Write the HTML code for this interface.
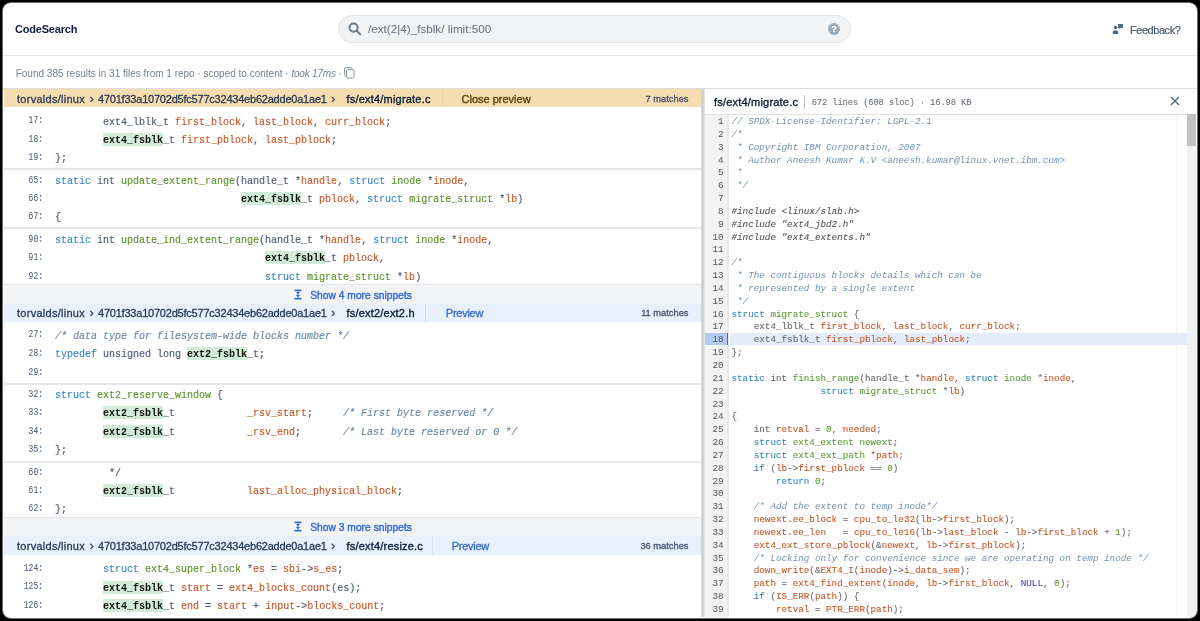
<!DOCTYPE html><html><head><meta charset="utf-8"><title>CodeSearch</title><style>html,body{margin:0;padding:0;width:1200px;height:621px;overflow:hidden;background:#000;}
.win{position:absolute;left:3px;top:3px;width:1194px;height:615px;background:#fff;border-radius:8px;overflow:hidden;box-shadow:0 0 0 1px #6e6e6e;}
.c{position:absolute;left:-3px;top:-3px;width:1200px;height:621px;font-family:"Liberation Sans",sans-serif;will-change:transform;}
.c div{position:absolute;white-space:pre;}
.c svg{position:absolute;}
.brand{left:15px;font-size:11px;line-height:14px;font-weight:bold;color:#0e1e38;letter-spacing:-0.2px;}
.search{left:338px;top:15px;width:511px;height:26px;border:1px solid #e1e4e8;background:#f1f3f4;border-radius:14px;}
.mag{left:348px;top:22px;}
.stext{left:368px;font-size:11.7px;line-height:14px;color:#646f7d;}
.help{left:828px;top:23px;width:12.4px;height:12.4px;border-radius:50%;background:#9fadba;}
.help span{position:absolute;left:0;top:0;width:12.4px;text-align:center;font-size:9.5px;line-height:12.4px;font-weight:bold;color:#fff;}
.fbi{left:1112px;top:23px;}
.fb{left:1130px;font-size:11px;line-height:14px;color:#4a5a6e;letter-spacing:-0.45px;-webkit-text-stroke-width:0.2px;}
.hline{left:0;top:55px;width:1200px;height:1px;background:#e5e7eb;}
.summary{left:15.7px;font-size:10px;line-height:13px;color:#748296;}
.summary i{letter-spacing:-0.2px;}
.copy{left:344.4px;top:67px;}
.rline{left:0;top:88px;width:1200px;height:1px;background:#dedede;}
.hdr{left:4px;width:697.5px;}
.ht{font-size:11px;line-height:14px;}
.repo{color:#2b3a55;letter-spacing:0.27px;-webkit-text-stroke-width:0.3px;}
.chev{color:#2b3a55;font-size:13px!important;-webkit-text-stroke-width:0.2px;}
.hash{color:#2b3a55;letter-spacing:-0.216px;-webkit-text-stroke-width:0.3px;}
.fname{color:#0e1e38;letter-spacing:0.2px;-webkit-text-stroke-width:0.35px;}
.hdiv{width:1px;}
.clp{color:#60440f;-webkit-text-stroke-width:0.4px;}
.prev{color:#3a6fc6;letter-spacing:-0.25px;-webkit-text-stroke-width:0.35px;}
.matches{right:511.5px;font-size:9.3px;line-height:12px;color:#44516b;-webkit-text-stroke-width:0.3px;}
.sep{left:4px;width:697.5px;height:2px;background:#e6e6e6;}
.band{left:4px;width:697.5px;background:#f3f4f6;border-top:1px solid #e3e5e8;box-sizing:border-box;}
.exp{left:293.5px;}
.bandt{left:310.2px;font-size:10.2px;line-height:12px;color:#3b6fd0;letter-spacing:0.05px;-webkit-text-stroke-width:0.45px;}
.ln{left:0;width:43px;text-align:right;font-family:"Liberation Mono",monospace;font-size:10px;line-height:14px;color:#56637d;transform:scaleX(0.8);transform-origin:100% 50%;-webkit-text-stroke-width:0.1px;}
.lc{left:55px;font-family:"Liberation Mono",monospace;font-size:10px;line-height:14px;color:#4f5b76;-webkit-text-stroke-width:0.15px;}
.lc .k{color:#3a88c2;}
.lc .t{color:#4f5b76;}
.lc .f{color:#5f922f;}
.lc .v{color:#c4582b;}
.lc .x{color:#4f5b76;}
.lc .cm{color:#6c86a6;font-style:italic;}
.lc .hl{background:#d3ecd9;color:#111;font-weight:bold;padding-top:2px;padding-bottom:0;-webkit-text-stroke-width:0;}
.rp{left:701px;top:88.5px;width:4px;height:528.5px;background:linear-gradient(90deg,#dcdcdc 0,#cdcdcd 45%,#d6d6d6 70%,#ececec 100%);}
.rptitle{left:714px;font-size:11px;line-height:14px;color:#0e1e38;letter-spacing:0.2px;-webkit-text-stroke-width:0.35px;}
.rpdiv{left:804.2px;top:95.3px;width:1px;height:13.4px;background:#b9bfc7;}
.rpmeta{left:811.7px;font-family:"Liberation Mono",monospace;font-size:8.8px;line-height:12px;color:#6d7480;letter-spacing:-0.13px;-webkit-text-stroke-width:0.1px;}
.close{left:1170px;top:96px;}
.rph{left:704px;top:113.5px;width:493px;height:1px;background:#e3e3e3;}
.gut{left:705px;top:114.5px;width:22px;height:502.5px;background:#f3f3f3;}
.gutb{left:727px;top:114.5px;width:2px;height:502.5px;background:#e9e9e9;}
.margin{left:1176px;top:114.5px;width:1px;height:502.5px;background:#f0f0f0;}
.curg{left:705px;width:22px;height:11.8px;background:#b4caec;}
.curbar{left:727px;width:1.2px;height:11.8px;background:#3d6fbd;}
.curl{left:730px;width:456.7px;height:11.8px;background:#e3ecfb;}
.track{left:1186.8px;top:114.3px;width:9.2px;height:502.7px;background:#f0f1f3;}
.thumb{left:1186.8px;top:113.8px;width:9.2px;height:32.4px;background:#c1c1c1;}
.rn{left:704px;width:19.5px;text-align:right;font-family:"Liberation Mono",monospace;font-size:9.275px;line-height:12.836px;color:#555;}
.rc{left:731.5px;font-family:"Liberation Mono",monospace;font-size:9.275px;line-height:12.836px;color:#6a6a6a;-webkit-text-stroke-width:0.1px;}
.rc .k{color:#3a88c2;}
.rc .t{color:#6a6a6a;}
.rc .f{color:#5f9a35;}
.rc .v{color:#c4582b;}
.rc .x{color:#6a6a6a;}
.rc .nu{color:#5f9a35;}
.rc .nl{color:#4b3fbf;}
.rc .cm{color:#7592b3;font-style:italic;-webkit-text-stroke-width:0;}
.rc .inc{color:#555;font-style:italic;}
</style></head><body><div class="win"><div class="c">
<div class="brand" style="top:22.19px">CodeSearch</div>
<div class="search"></div>
<svg class="mag" width="14" height="14" viewBox="0 0 14 14"><circle cx="5.6" cy="5.6" r="4.1" fill="none" stroke="#6a7988" stroke-width="1.9"/><path d="M8.6 8.6L12.2 12.2" stroke="#6a7988" stroke-width="2" stroke-linecap="round"/></svg>
<div class="stext" style="top:22.45px">/ext(2|4)_fsblk/ limit:500</div>
<div class="help"><span>?</span></div>
<svg class="fbi" width="12" height="12" viewBox="0 0 12 12"><circle cx="3.5" cy="4.5" r="1.75" fill="#536a85"/><path d="M0.7 10.9C0.4 8.2 1.3 7.2 3.5 7.2C5.7 7.2 6.6 8.2 6.3 10.9Z" fill="#536a85"/><path d="M6 1H10.9V4.9H8.3L7.1 6.3V4.9H6Z" fill="#536a85"/></svg>
<div class="fb" style="top:22.76px">Feedback?</div>
<div class="hline"></div>
<div class="summary" style="top:66.73px">Found 385 results in 31 files from 1 repo · scoped to content · <i>took 17ms</i> · </div>
<svg class="copy" width="11" height="12" viewBox="0 0 11 12"><rect x="0.6" y="0.6" width="7.4" height="8.4" rx="1.2" fill="none" stroke="#8592a1" stroke-width="1"/><rect x="2.5" y="2.6" width="7.6" height="8.4" rx="1.2" fill="#fff" stroke="#8592a1" stroke-width="1"/></svg>
<div class="rline"></div>
<div class="hdr" style="top:88.50px;height:18.70px;background:#f4ddb1"></div><div class="ht repo" style="top:92.19px;left:17px">torvalds/linux</div><div class="ht chev" style="top:92.19px;left:89.5px">&#x203A;</div><div class="ht hash" style="top:92.19px;left:98px">4701f33a10702d5fc577c32434eb62adde0a1ae1</div><div class="ht chev" style="top:92.19px;left:331px">&#x203A;</div><div class="ht fname" style="top:92.19px;left:346.5px">fs/ext4/migrate.c</div><div class="hdiv" style="top:88.50px;height:18.70px;left:441.5px;background:#ecd3a4"></div><div class="ht clp" style="top:92.19px;left:461.5px">Close preview</div><div class="matches" style="top:92.88px">7 matches</div>
<div class="sep" style="top:168px"></div>
<div class="sep" style="top:227px"></div>
<div class="sep" style="top:383px"></div>
<div class="sep" style="top:461px"></div>
<div class="band" style="top:284.40px;height:19.40px"></div><svg class="exp" style="top:289.30px" width="8" height="11" viewBox="0 0 8 11"><rect x="0.5" y="0.6" width="7" height="1.6" fill="#2d64cf"/><rect x="0.5" y="8.9" width="7" height="1.6" fill="#2d64cf"/><path d="M2 3.2Q4 2.6 6 3.2L4 5.3Z" fill="#2d64cf"/><path d="M1.9 6.1Q4 5.5 6.1 6.1L4 8.3Z" fill="#2d64cf"/><path d="M4 2.2V8.9" stroke="#2d64cf" stroke-width="0.7"/></svg><div class="bandt" style="top:289.77px">Show 4 more snippets</div>
<div class="hdr" style="top:303.80px;height:18.20px;background:#e7f0fb"></div><div class="ht repo" style="top:306.19px;left:17px">torvalds/linux</div><div class="ht chev" style="top:306.19px;left:89.5px">&#x203A;</div><div class="ht hash" style="top:306.19px;left:98px">4701f33a10702d5fc577c32434eb62adde0a1ae1</div><div class="ht chev" style="top:306.19px;left:331px">&#x203A;</div><div class="ht fname" style="top:306.19px;left:346.5px">fs/ext2/ext2.h</div><div class="hdiv" style="top:303.80px;height:18.20px;left:425.3px;background:#d3e1f3"></div><div class="ht prev" style="top:306.19px;left:445.8px">Preview</div><div class="matches" style="top:306.88px">11 matches</div>
<div class="band" style="top:517.20px;height:19.00px"></div><svg class="exp" style="top:521.30px" width="8" height="11" viewBox="0 0 8 11"><rect x="0.5" y="0.6" width="7" height="1.6" fill="#2d64cf"/><rect x="0.5" y="8.9" width="7" height="1.6" fill="#2d64cf"/><path d="M2 3.2Q4 2.6 6 3.2L4 5.3Z" fill="#2d64cf"/><path d="M1.9 6.1Q4 5.5 6.1 6.1L4 8.3Z" fill="#2d64cf"/><path d="M4 2.2V8.9" stroke="#2d64cf" stroke-width="0.7"/></svg><div class="bandt" style="top:521.77px">Show 3 more snippets</div>
<div class="hdr" style="top:536.20px;height:18.70px;background:#e7f0fb"></div><div class="ht repo" style="top:538.99px;left:17px">torvalds/linux</div><div class="ht chev" style="top:538.99px;left:89.5px">&#x203A;</div><div class="ht hash" style="top:538.99px;left:98px">4701f33a10702d5fc577c32434eb62adde0a1ae1</div><div class="ht chev" style="top:538.99px;left:331px">&#x203A;</div><div class="ht fname" style="top:538.99px;left:346.5px">fs/ext4/resize.c</div><div class="hdiv" style="top:536.20px;height:18.70px;left:432.0px;background:#d3e1f3"></div><div class="ht prev" style="top:538.99px;left:451.7px">Preview</div><div class="matches" style="top:539.68px">36 matches</div>
<div class="ln" style="top:114.44px">17:</div>
<div class="lc" style="top:115.64px">        <span class="t">ext4_lblk_t</span> <span class="v">first_block</span><span class="x">, </span><span class="v">last_block</span><span class="x">, </span><span class="v">curr_block</span><span class="x">;</span></div>
<div class="ln" style="top:132.74px">18:</div>
<div class="lc" style="top:133.94px">        <span class="hl">ext4_fsblk</span><span class="t">_t</span> <span class="v">first_pblock</span><span class="x">, </span><span class="v">last_pblock</span><span class="x">;</span></div>
<div class="ln" style="top:151.04px">19:</div>
<div class="lc" style="top:152.24px"><span class="x">};</span></div>
<div class="ln" style="top:173.54px">65:</div>
<div class="lc" style="top:174.74px"><span class="k">static</span> <span class="t">int</span> <span class="f">update_extent_range</span><span class="x">(handle_t *</span><span class="v">handle</span><span class="x">, </span><span class="k">struct</span> <span class="f">inode</span><span class="x"> *</span><span class="v">inode</span><span class="x">,</span></div>
<div class="ln" style="top:191.84px">66:</div>
<div class="lc" style="top:193.04px">                               <span class="hl">ext4_fsblk</span><span class="t">_t</span> <span class="v">pblock</span><span class="x">, </span><span class="k">struct</span> <span class="f">migrate_struct</span><span class="x"> *</span><span class="v">lb</span><span class="x">)</span></div>
<div class="ln" style="top:210.24px">67:</div>
<div class="lc" style="top:211.44px"><span class="x">{</span></div>
<div class="ln" style="top:232.54px">90:</div>
<div class="lc" style="top:233.74px"><span class="k">static</span> <span class="t">int</span> <span class="f">update_ind_extent_range</span><span class="x">(handle_t *</span><span class="v">handle</span><span class="x">, </span><span class="k">struct</span> <span class="f">inode</span><span class="x"> *</span><span class="v">inode</span><span class="x">,</span></div>
<div class="ln" style="top:250.94px">91:</div>
<div class="lc" style="top:252.14px">                                   <span class="hl">ext4_fsblk</span><span class="t">_t</span> <span class="v">pblock</span><span class="x">,</span></div>
<div class="ln" style="top:269.64px">92:</div>
<div class="lc" style="top:270.84px">                                   <span class="k">struct</span> <span class="f">migrate_struct</span><span class="x"> *</span><span class="v">lb</span><span class="x">)</span></div>
<div class="ln" style="top:328.34px">27:</div>
<div class="lc" style="top:329.54px"><span class="cm">/* data type for filesystem-wide blocks number */</span></div>
<div class="ln" style="top:346.94px">28:</div>
<div class="lc" style="top:348.14px"><span class="k">typedef</span> <span class="t">unsigned long</span> <span class="hl">ext2_fsblk</span><span class="t">_t</span><span class="x">;</span></div>
<div class="ln" style="top:365.54px">29:</div>
<div class="lc" style="top:366.74px"></div>
<div class="ln" style="top:387.84px">32:</div>
<div class="lc" style="top:389.04px"><span class="k">struct</span> <span class="f">ext2_reserve_window</span><span class="x"> {</span></div>
<div class="ln" style="top:406.24px">33:</div>
<div class="lc" style="top:407.44px">        <span class="hl">ext2_fsblk</span><span class="t">_t</span>            <span class="v">_rsv_start</span><span class="x">;</span>     <span class="cm">/* First byte reserved */</span></div>
<div class="ln" style="top:424.54px">34:</div>
<div class="lc" style="top:425.74px">        <span class="hl">ext2_fsblk</span><span class="t">_t</span>            <span class="v">_rsv_end</span><span class="x">;</span>       <span class="cm">/* Last byte reserved or 0 */</span></div>
<div class="ln" style="top:443.04px">35:</div>
<div class="lc" style="top:444.24px"><span class="x">};</span></div>
<div class="ln" style="top:465.74px">60:</div>
<div class="lc" style="top:466.94px">         <span class="x">*/</span></div>
<div class="ln" style="top:483.84px">61:</div>
<div class="lc" style="top:485.04px">        <span class="hl">ext2_fsblk</span><span class="t">_t</span>            <span class="v">last_alloc_physical_block</span><span class="x">;</span></div>
<div class="ln" style="top:502.04px">62:</div>
<div class="lc" style="top:503.24px"><span class="x">};</span></div>
<div class="ln" style="top:561.64px">124:</div>
<div class="lc" style="top:562.84px">        <span class="k">struct</span> <span class="f">ext4_super_block</span><span class="x"> *</span><span class="v">es</span><span class="x"> = </span><span class="v">sbi</span><span class="x">-&gt;</span><span class="v">s_es</span><span class="x">;</span></div>
<div class="ln" style="top:580.34px">125:</div>
<div class="lc" style="top:581.54px">        <span class="hl">ext4_fsblk</span><span class="t">_t</span> <span class="v">start</span><span class="x"> = </span><span class="v">ext4_blocks_count</span><span class="x">(es);</span></div>
<div class="ln" style="top:599.04px">126:</div>
<div class="lc" style="top:600.24px">        <span class="hl">ext4_fsblk</span><span class="t">_t</span> <span class="v">end</span><span class="x"> = </span><span class="v">start</span><span class="x"> + </span><span class="v">input</span><span class="x">-&gt;</span><span class="v">blocks_count</span><span class="x">;</span></div>
<div class="rp"></div>
<div class="rptitle" style="top:95.19px">fs/ext4/migrate.c</div>
<div class="rpdiv"></div>
<div class="rpmeta" style="top:97.46px">672 lines (608 sloc) · 16.98 KB</div>
<svg class="close" width="10" height="10" viewBox="0 0 10 10"><path d="M1 1L9 9M9 1L1 9" stroke="#4d6481" stroke-width="1.25"/></svg>
<div class="rph"></div>
<div class="gut"></div><div class="gutb"></div><div class="margin"></div>
<div class="curg" style="top:333px"></div><div class="curbar" style="top:333px"></div><div class="curl" style="top:333px"></div>
<div class="track"></div><div class="thumb"></div>
<div class="rn" style="top:116.11px">1</div>
<div class="rc" style="top:116.11px"><span class="cm">// SPDX-License-Identifier: LGPL-2.1</span></div>
<div class="rn" style="top:128.95px">2</div>
<div class="rc" style="top:128.95px"><span class="cm">/*</span></div>
<div class="rn" style="top:141.78px">3</div>
<div class="rc" style="top:141.78px"><span class="cm"> * Copyright IBM Corporation, 2007</span></div>
<div class="rn" style="top:154.62px">4</div>
<div class="rc" style="top:154.62px"><span class="cm"> * Author Aneesh Kumar K.V &lt;aneesh.kumar@linux.vnet.ibm.com&gt;</span></div>
<div class="rn" style="top:167.46px">5</div>
<div class="rc" style="top:167.46px"><span class="cm"> *</span></div>
<div class="rn" style="top:180.29px">6</div>
<div class="rc" style="top:180.29px"><span class="cm"> */</span></div>
<div class="rn" style="top:193.13px">7</div>
<div class="rc" style="top:193.13px"></div>
<div class="rn" style="top:205.96px">8</div>
<div class="rc" style="top:205.96px"><span class="inc">#include &lt;linux/slab.h&gt;</span></div>
<div class="rn" style="top:218.80px">9</div>
<div class="rc" style="top:218.80px"><span class="inc">#include &quot;ext4_jbd2.h&quot;</span></div>
<div class="rn" style="top:231.64px">10</div>
<div class="rc" style="top:231.64px"><span class="inc">#include &quot;ext4_extents.h&quot;</span></div>
<div class="rn" style="top:244.47px">11</div>
<div class="rc" style="top:244.47px"></div>
<div class="rn" style="top:257.31px">12</div>
<div class="rc" style="top:257.31px"><span class="cm">/*</span></div>
<div class="rn" style="top:270.14px">13</div>
<div class="rc" style="top:270.14px"><span class="cm"> * The contiguous blocks details which can be</span></div>
<div class="rn" style="top:282.98px">14</div>
<div class="rc" style="top:282.98px"><span class="cm"> * represented by a single extent</span></div>
<div class="rn" style="top:295.82px">15</div>
<div class="rc" style="top:295.82px"><span class="cm"> */</span></div>
<div class="rn" style="top:308.65px">16</div>
<div class="rc" style="top:308.65px"><span class="k">struct</span> <span class="f">migrate_struct</span><span class="x"> {</span></div>
<div class="rn" style="top:321.49px">17</div>
<div class="rc" style="top:321.49px">    <span class="t">ext4_lblk_t</span> <span class="v">first_block</span><span class="x">, </span><span class="v">last_block</span><span class="x">, </span><span class="v">curr_block</span><span class="x">;</span></div>
<div class="rn" style="top:334.32px">18</div>
<div class="rc" style="top:334.32px">    <span class="t">ext4_fsblk_t</span> <span class="v">first_pblock</span><span class="x">, </span><span class="v">last_pblock</span><span class="x">;</span></div>
<div class="rn" style="top:347.16px">19</div>
<div class="rc" style="top:347.16px"><span class="x">};</span></div>
<div class="rn" style="top:360.00px">20</div>
<div class="rc" style="top:360.00px"></div>
<div class="rn" style="top:372.83px">21</div>
<div class="rc" style="top:372.83px"><span class="k">static</span> <span class="t">int</span> <span class="f">finish_range</span><span class="x">(handle_t *</span><span class="v">handle</span><span class="x">, </span><span class="k">struct</span> <span class="f">inode</span><span class="x"> *</span><span class="v">inode</span><span class="x">,</span></div>
<div class="rn" style="top:385.67px">22</div>
<div class="rc" style="top:385.67px">                <span class="k">struct</span> <span class="f">migrate_struct</span><span class="x"> *</span><span class="v">lb</span><span class="x">)</span></div>
<div class="rn" style="top:398.50px">23</div>
<div class="rc" style="top:398.50px"></div>
<div class="rn" style="top:411.34px">24</div>
<div class="rc" style="top:411.34px"><span class="x">{</span></div>
<div class="rn" style="top:424.18px">25</div>
<div class="rc" style="top:424.18px">    <span class="t">int</span> <span class="v">retval</span><span class="x"> = </span><span class="nu">0</span><span class="x">, </span><span class="v">needed</span><span class="x">;</span></div>
<div class="rn" style="top:437.01px">26</div>
<div class="rc" style="top:437.01px">    <span class="k">struct</span> <span class="f">ext4_extent newext</span><span class="x">;</span></div>
<div class="rn" style="top:449.85px">27</div>
<div class="rc" style="top:449.85px">    <span class="k">struct</span> <span class="f">ext4_ext_path</span><span class="x"> *</span><span class="v">path</span><span class="x">;</span></div>
<div class="rn" style="top:462.68px">28</div>
<div class="rc" style="top:462.68px">    <span class="k">if</span><span class="x"> (</span><span class="v">lb</span><span class="x">-&gt;</span><span class="v">first_pblock</span><span class="x"> == </span><span class="nu">0</span><span class="x">)</span></div>
<div class="rn" style="top:475.52px">29</div>
<div class="rc" style="top:475.52px">        <span class="k">return</span> <span class="nu">0</span><span class="x">;</span></div>
<div class="rn" style="top:488.36px">30</div>
<div class="rc" style="top:488.36px"></div>
<div class="rn" style="top:501.19px">31</div>
<div class="rc" style="top:501.19px">    <span class="cm">/* Add the extent to temp inode*/</span></div>
<div class="rn" style="top:514.03px">32</div>
<div class="rc" style="top:514.03px">    <span class="v">newext</span><span class="x">.</span><span class="v">ee_block</span><span class="x"> = </span><span class="v">cpu_to_le32</span><span class="x">(</span><span class="v">lb</span><span class="x">-&gt;</span><span class="v">first_block</span><span class="x">);</span></div>
<div class="rn" style="top:526.86px">33</div>
<div class="rc" style="top:526.86px">    <span class="v">newext</span><span class="x">.</span><span class="v">ee_len</span><span class="x">   = </span><span class="v">cpu_to_le16</span><span class="x">(</span><span class="v">lb</span><span class="x">-&gt;</span><span class="v">last_block</span><span class="x"> - </span><span class="v">lb</span><span class="x">-&gt;</span><span class="v">first_block</span><span class="x"> + </span><span class="nu">1</span><span class="x">);</span></div>
<div class="rn" style="top:539.70px">34</div>
<div class="rc" style="top:539.70px">    <span class="v">ext4_ext_store_pblock</span><span class="x">(&amp;</span><span class="v">newext</span><span class="x">, </span><span class="v">lb</span><span class="x">-&gt;</span><span class="v">first_pblock</span><span class="x">);</span></div>
<div class="rn" style="top:552.54px">35</div>
<div class="rc" style="top:552.54px">    <span class="cm">/* Locking only for convenience since we are operating on temp inode */</span></div>
<div class="rn" style="top:565.37px">36</div>
<div class="rc" style="top:565.37px">    <span class="v">down_write</span><span class="x">(&amp;</span><span class="v">EXT4_I</span><span class="x">(</span><span class="v">inode</span><span class="x">)-&gt;</span><span class="v">i_data_sem</span><span class="x">);</span></div>
<div class="rn" style="top:578.21px">37</div>
<div class="rc" style="top:578.21px">    <span class="v">path</span><span class="x"> = </span><span class="v">ext4_find_extent</span><span class="x">(</span><span class="v">inode</span><span class="x">, </span><span class="v">lb</span><span class="x">-&gt;</span><span class="v">first_block</span><span class="x">, </span><span class="nl">NULL</span><span class="x">, </span><span class="nu">0</span><span class="x">);</span></div>
<div class="rn" style="top:591.04px">38</div>
<div class="rc" style="top:591.04px">    <span class="k">if</span><span class="x"> (</span><span class="v">IS_ERR</span><span class="x">(</span><span class="v">path</span><span class="x">)) {</span></div>
<div class="rn" style="top:603.88px">39</div>
<div class="rc" style="top:603.88px">        <span class="v">retval</span><span class="x"> = </span><span class="v">PTR_ERR</span><span class="x">(</span><span class="v">path</span><span class="x">);</span></div>
</div></div></body></html>
